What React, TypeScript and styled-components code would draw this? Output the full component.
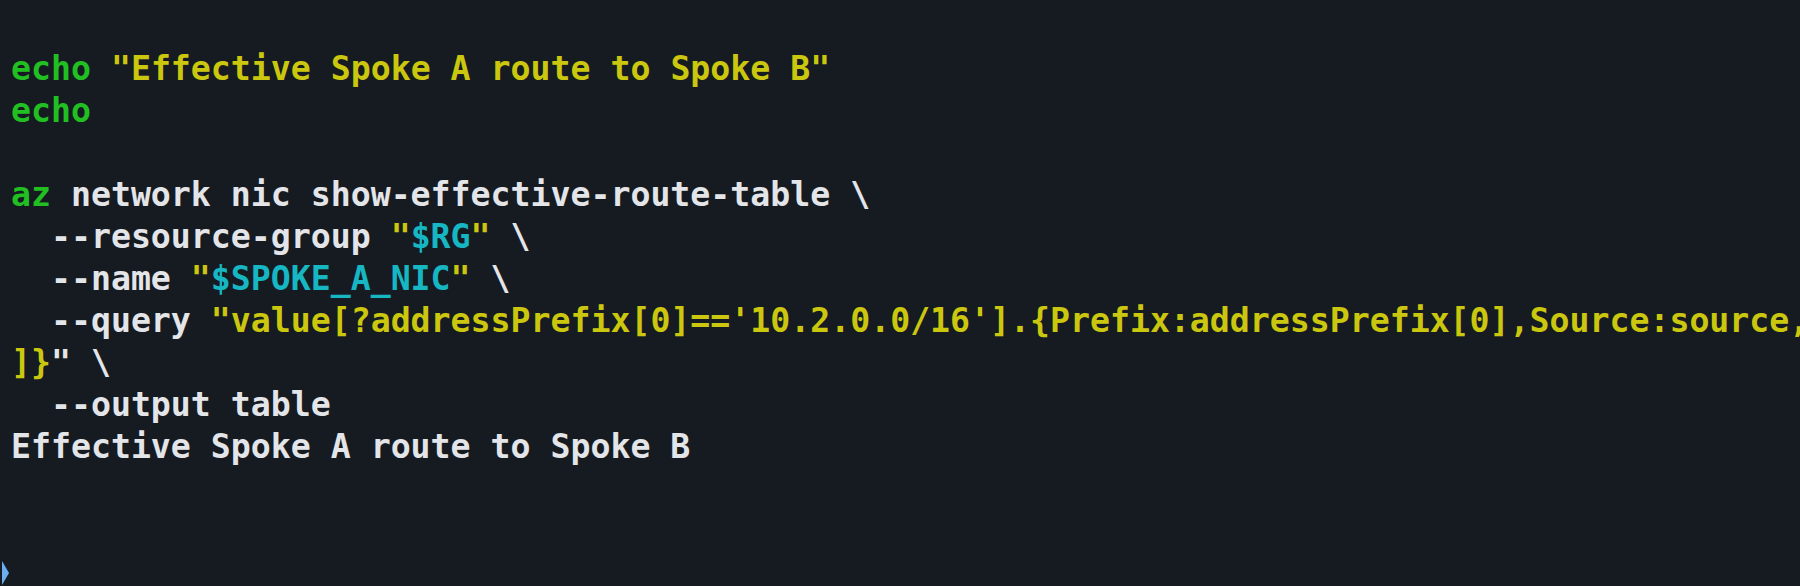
import React from "react";
import styled, { createGlobalStyle } from "styled-components";

const GlobalStyle = createGlobalStyle`
  html, body {
    margin: 0;
    padding: 0;
    background: #161b22;
    overflow: hidden;
  }
`;

const Terminal = styled.div`
  width: 1800px;
  height: 586px;
  box-sizing: border-box;
  padding: 48px 0 0 11px;
  background: #161b22;
  overflow: hidden;
  font-family: "DejaVu Sans Mono", "Liberation Mono", monospace;
  font-weight: bold;
  font-size: 33.2px;
  line-height: 42px;
  color: #e3e5e8;
`;

const Line = styled.div`
  height: 42px;
  white-space: pre;
`;

type Tone = "cmd" | "str" | "var" | "plain";

const toneColor: Record<Tone, string> = {
  cmd: "#22bf22",
  str: "#cbc70f",
  var: "#16b6c2",
  plain: "#e3e5e8",
};

const Tok = styled.span<{ $tone: Tone }>`
  color: ${(p) => toneColor[p.$tone]};
`;

const PromptRow = styled.div`
  height: 42px;
  display: flex;
  align-items: center;
  margin-left: -9px;
`;

const Caret = () => (
  <svg width="8" height="24" viewBox="0 0 8 24">
    <polygon points="0,0 7,12 0,24" fill="#6aaef0" />
  </svg>
);

export default function App() {
  return (
    <>
      <GlobalStyle />
      <Terminal>
        <Line>
          <Tok $tone="cmd">echo</Tok>{" "}
          <Tok $tone="str">"Effective Spoke A route to Spoke B"</Tok>
        </Line>
        <Line>
          <Tok $tone="cmd">echo</Tok>
        </Line>
        <Line> </Line>
        <Line>
          <Tok $tone="cmd">az</Tok>
          <Tok $tone="plain"> network nic show-effective-route-table \</Tok>
        </Line>
        <Line>
          <Tok $tone="plain">  --resource-group </Tok>
          <Tok $tone="str">"</Tok>
          <Tok $tone="var">$RG</Tok>
          <Tok $tone="str">"</Tok>
          <Tok $tone="plain"> \</Tok>
        </Line>
        <Line>
          <Tok $tone="plain">  --name </Tok>
          <Tok $tone="str">"</Tok>
          <Tok $tone="var">$SPOKE_A_NIC</Tok>
          <Tok $tone="str">"</Tok>
          <Tok $tone="plain"> \</Tok>
        </Line>
        <Line>
          <Tok $tone="plain">  --query </Tok>
          <Tok $tone="str">
            "value[?addressPrefix[0]=='10.2.0.0/16'].{"{"}Prefix:addressPrefix[0],Source:source,
          </Tok>
        </Line>
        <Line>
          <Tok $tone="str">{"]}"}</Tok>
          <Tok $tone="plain">" \</Tok>
        </Line>
        <Line>
          <Tok $tone="plain">  --output table</Tok>
        </Line>
        <Line>
          <Tok $tone="plain">Effective Spoke A route to Spoke B</Tok>
        </Line>
        <Line> </Line>
        <Line> </Line>
        <PromptRow>
          <Caret />
        </PromptRow>
      </Terminal>
    </>
  );
}
